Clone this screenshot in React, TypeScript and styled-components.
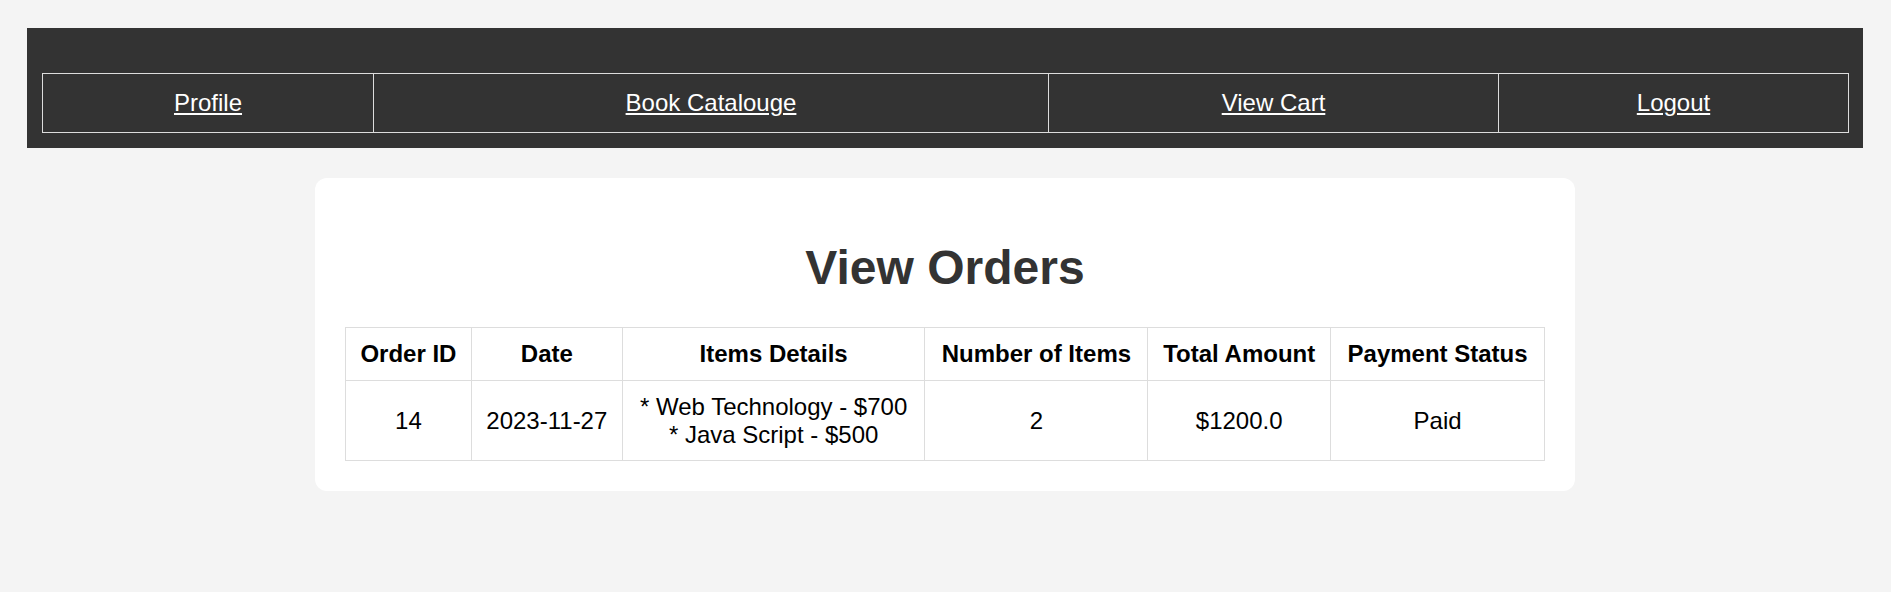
import React from "react";
import styled, { createGlobalStyle } from "styled-components";

const GlobalStyle = createGlobalStyle`
  html, body {
    margin: 0;
    padding: 0;
    background: #f4f4f4;
    font-family: "Liberation Sans", Arial, sans-serif;
  }
  * { box-sizing: border-box; }
`;

const Page = styled.div`
  padding: 28px 28px 100px 27px;
  background: #f4f4f4;
`;

const Header = styled.header`
  background: #333333;
  padding: 45px 14px 15px 15px;
`;

const NavTable = styled.table`
  width: 100%;
  border-collapse: collapse;
  table-layout: fixed;
  border: 1px solid #dddddd;
`;

const NavCell = styled.td`
  border: 1px solid #dddddd;
  padding: 15px;
  text-align: center;
  font-size: 24px;
  line-height: 28px;
`;

const NavLink = styled.a`
  color: #ffffff;
  text-decoration: underline;
  font-family: "Liberation Sans", Arial, sans-serif;
`;

const Card = styled.main`
  width: 1260px;
  margin: 30px auto 0;
  background: #ffffff;
  border-radius: 12px;
  padding: 30px;
`;

const Title = styled.h1`
  margin: 32px 0;
  text-align: center;
  font-size: 48px;
  font-weight: bold;
  color: #333333;
  line-height: 55px;
`;

const OrderTable = styled.table`
  width: 100%;
  border-collapse: collapse;
  table-layout: fixed;
`;

const HeadCell = styled.th`
  border: 1px solid #dddddd;
  padding: 12px;
  font-size: 24px;
  line-height: 28px;
  font-weight: bold;
  text-align: center;
  color: #000000;
  white-space: nowrap;
`;

const BodyCell = styled.td`
  border: 1px solid #dddddd;
  padding: 12px;
  font-size: 24px;
  line-height: 27.5px;
  text-align: center;
  color: #000000;
  white-space: nowrap;
`;

const navItems = [
  { label: "Profile", width: 331 },
  { label: "Book Catalouge", width: 675 },
  { label: "View Cart", width: 450 },
  { label: "Logout", width: 350 },
];
const navTotal = navItems.reduce((s, n) => s + n.width, 0);

const columns = [
  { label: "Order ID", width: 126 },
  { label: "Date", width: 151 },
  { label: "Items Details", width: 303 },
  { label: "Number of Items", width: 223 },
  { label: "Total Amount", width: 183 },
  { label: "Payment Status", width: 214 },
];
const colTotal = columns.reduce((s, c) => s + c.width, 0);

export default function App() {
  return (
    <>
      <GlobalStyle />
      <Page>
        <Header>
          <NavTable>
            <colgroup>
              {navItems.map((n) => (
                <col key={n.label} style={{ width: `${(n.width / navTotal) * 100}%` }} />
              ))}
            </colgroup>
            <tbody>
              <tr>
                {navItems.map((n) => (
                  <NavCell key={n.label}>
                    <NavLink href="#">{n.label}</NavLink>
                  </NavCell>
                ))}
              </tr>
            </tbody>
          </NavTable>
        </Header>
        <Card>
          <Title>View Orders</Title>
          <OrderTable>
            <colgroup>
              {columns.map((c) => (
                <col key={c.label} style={{ width: `${(c.width / colTotal) * 100}%` }} />
              ))}
            </colgroup>
            <thead>
              <tr>
                {columns.map((c) => (
                  <HeadCell key={c.label}>{c.label}</HeadCell>
                ))}
              </tr>
            </thead>
            <tbody>
              <tr>
                <BodyCell>14</BodyCell>
                <BodyCell>2023-11-27</BodyCell>
                <BodyCell>
                  * Web Technology - $700
                  <br />* Java Script - $500
                </BodyCell>
                <BodyCell>2</BodyCell>
                <BodyCell>$1200.0</BodyCell>
                <BodyCell>Paid</BodyCell>
              </tr>
            </tbody>
          </OrderTable>
        </Card>
      </Page>
    </>
  );
}
